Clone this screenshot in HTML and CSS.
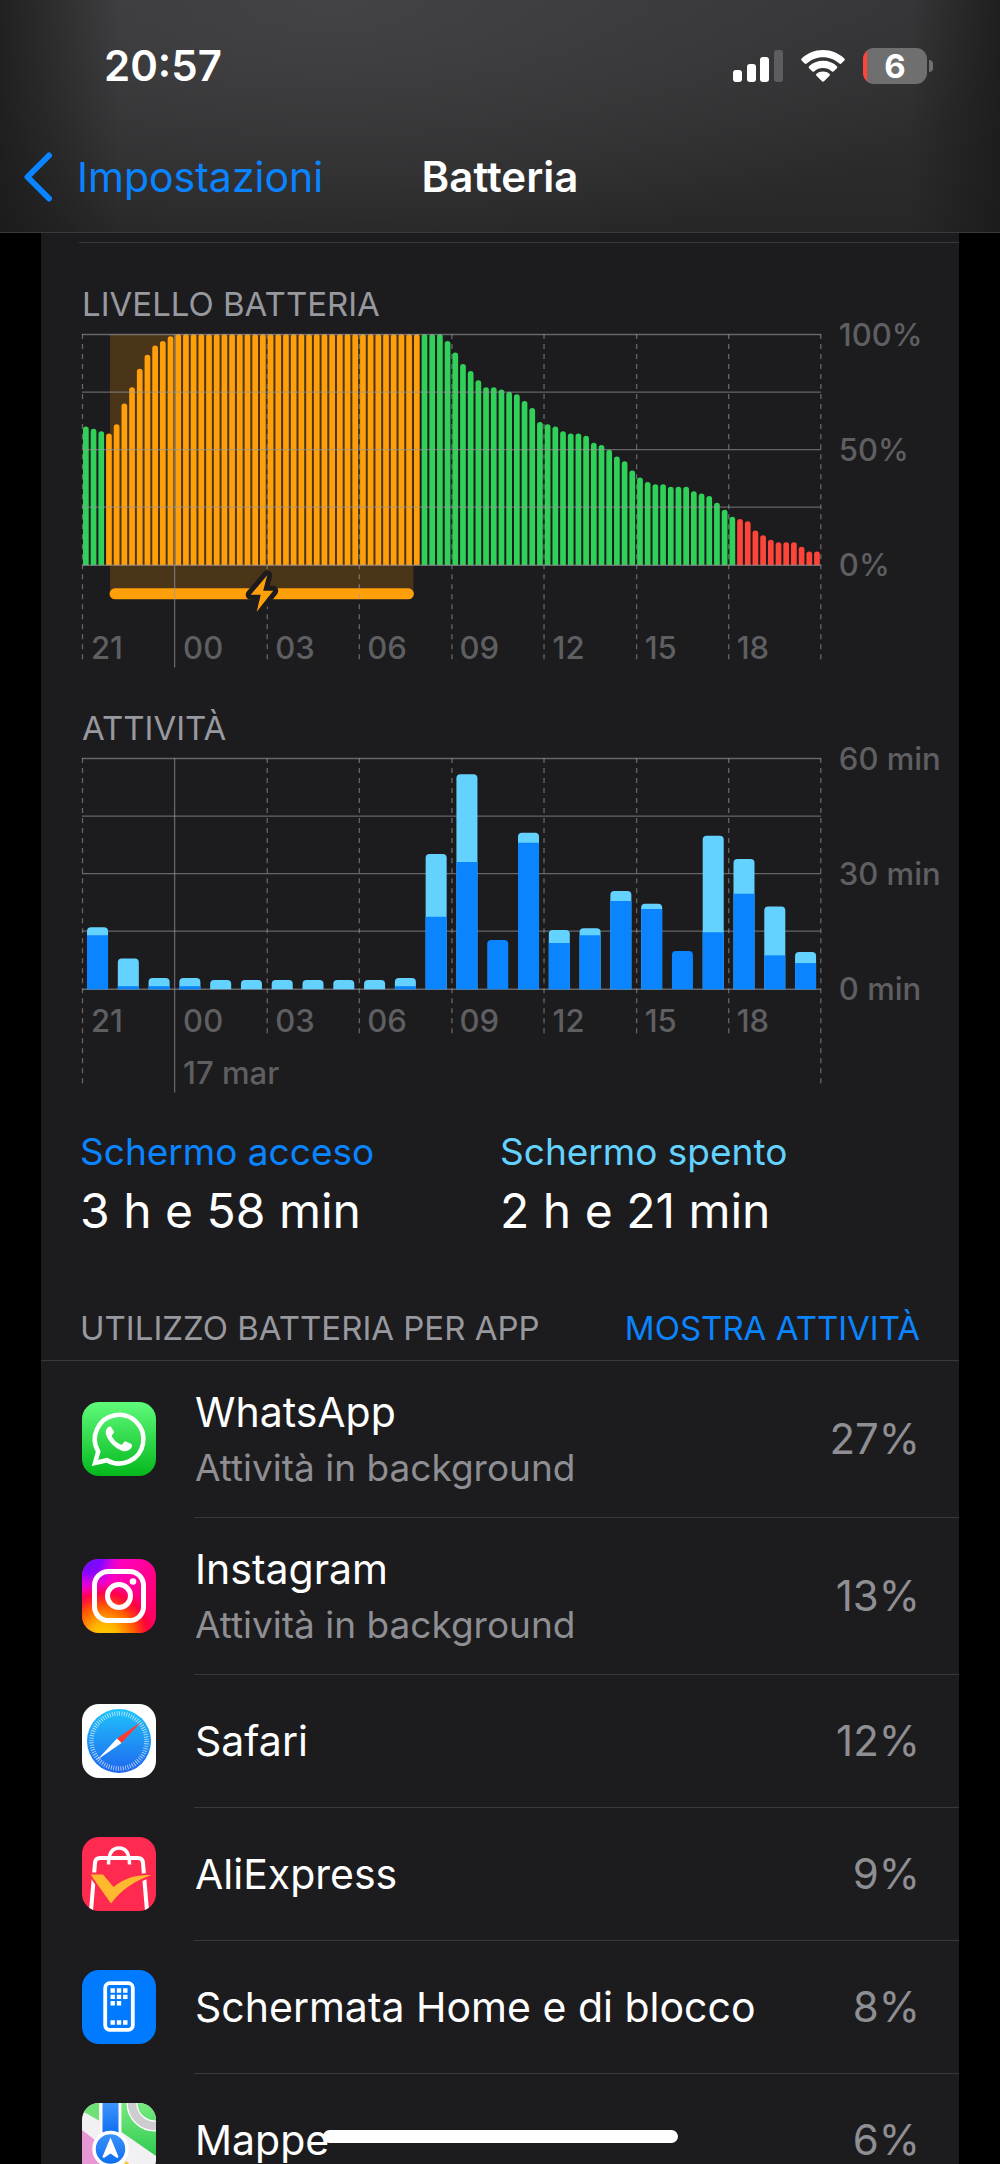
FILE: index.html
```html
<!DOCTYPE html>
<html lang="it">
<head>
<meta charset="utf-8">
<meta name="viewport" content="width=device-width, initial-scale=1">
<title>Batteria</title>
<link rel="stylesheet" href="styles.css">
</head>
<body>
<div class="screen">
  <header class="top">
    <div class="status">
      <span class="clock">20:57</span>
      <div class="status-icons">
        <svg class="signal" viewBox="0 0 50 32" aria-hidden="true">
          <rect x="0" y="20" width="9" height="12" rx="3"/>
          <rect x="14" y="14" width="9" height="18" rx="3"/>
          <rect x="27" y="7" width="9" height="25" rx="3"/>
          <rect class="dim" x="41" y="0" width="9" height="32" rx="3"/>
        </svg>
        <svg class="wifi" viewBox="0 0 44 32" aria-hidden="true">
          <path d="M22 0c8.300 0 15.700 3.200 21.300 8.400.6.600.6 1.400.1 2l-3.100 3.200c-.5.500-1.400.5-2 0C34 9.700 28.300 7.300 22 7.300S10 9.700 5.700 13.600c-.6.500-1.500.5-2 0L.6 10.400c-.5-.6-.5-1.400.1-2C6.300 3.200 13.700 0 22 0z"/>
          <path d="M22 10.800c5.400 0 10.200 2 13.900 5.400.6.500.6 1.400 0 2l-3.100 3.100c-.5.500-1.300.5-1.900.1-2.400-2.100-5.500-3.300-8.900-3.300s-6.500 1.200-8.900 3.300c-.6.400-1.400.4-1.900-.1l-3.100-3.100c-.6-.6-.6-1.500 0-2 3.700-3.400 8.500-5.400 13.900-5.400z"/>
          <path d="M22 21.400c2.500 0 4.700.9 6.400 2.300.7.500.7 1.400.1 2l-5.500 5.600c-.6.600-1.400.6-2 0l-5.500-5.600c-.6-.6-.6-1.500.1-2 1.700-1.400 3.900-2.300 6.400-2.300z"/>
        </svg>
        <div class="battery"><span class="battery-body">6</span><span class="battery-cap"></span></div>
      </div>
    </div>
    <nav class="nav">
      <a class="back" href="#impostazioni">
        <svg class="chevron" viewBox="0 0 28 50" aria-hidden="true"><path d="M25 3.500 3.500 25 25 46.500"/></svg>
        <span>Impostazioni</span>
      </a>
      <h1 class="title">Batteria</h1>
    </nav>
  </header>

  <main class="card">
    <section class="chart-block level-block">
      <h2 class="label">LIVELLO BATTERIA</h2>
      <svg class="chart" viewBox="0 -10 876 350" role="img" aria-label="Livello batteria">
        <path class="charge-zone" d="M28 0H331V259H28z"/>
        <g id="level-bars"></g>
        <path class="charge-bar" d="M33 259.500H326"/>
        <g class="grid">
          <path d="M0 .5H738M0 58H738M0 115.500H738M0 173H738M0 231H738"/>
          <path d="M92.500 0V333"/>
          <path class="dash" d="M.5 0V329M185 0V329M277 0V329M369.500 0V329M461.500 0V329M554 0V329M646 0V329M738 0V329"/>
        </g>
        <path class="bolt" d="M185 241 168.500 260.500h10l-4 17 16.500-21h-10z"/>
        <g class="axis">
          <text x="9" y="325">21</text>
          <text x="101" y="325">00</text>
          <text x="193" y="325">03</text>
          <text x="285" y="325">06</text>
          <text x="377" y="325">09</text>
          <text x="470" y="325">12</text>
          <text x="562" y="325">15</text>
          <text x="654" y="325">18</text>
          <text x="756" y="12">100%</text>
          <text x="756" y="127">50%</text>
          <text x="756" y="242">0%</text>
        </g>
      </svg>
    </section>

    <section class="chart-block">
      <h2 class="label">ATTIVITÀ</h2>
      <svg class="chart" viewBox="0 -10 876 350" role="img" aria-label="Attività">
        <g class="grid">
          <path d="M0 .5H738M0 58H738M0 115.500H738M0 173H738M0 231H738"/>
          <path d="M92.500 0V334"/>
          <path class="dash" d="M.5 0V329M185 0V277M277 0V277M369.500 0V277M461.500 0V277M554 0V277M646 0V277M738 0V329"/>
        </g>
        <g id="activity-bars"></g>
        <g class="axis">
          <text x="9" y="274">21</text>
          <text x="101" y="274">00</text>
          <text x="193" y="274">03</text>
          <text x="285" y="274">06</text>
          <text x="377" y="274">09</text>
          <text x="470" y="274">12</text>
          <text x="562" y="274">15</text>
          <text x="654" y="274">18</text>
          <text x="101" y="326">17 mar</text>
          <text x="756" y="12">60 min</text>
          <text x="756" y="127">30 min</text>
          <text x="756" y="242">0 min</text>
        </g>
      </svg>
    </section>

    <dl class="totals">
      <div class="total">
        <dt class="on">Schermo acceso</dt>
        <dd>3 h e 58 min</dd>
      </div>
      <div class="total">
        <dt class="off">Schermo spento</dt>
        <dd>2 h e 21 min</dd>
      </div>
    </dl>

    <div class="list-head">
      <h2 class="label">UTILIZZO BATTERIA PER APP</h2>
      <button class="toggle" type="button">MOSTRA ATTIVITÀ</button>
    </div>

    <ul class="apps">
      <li class="app tall">
        <svg class="icon" viewBox="0 0 74 74" aria-hidden="true">
          <defs><linearGradient id="wa" x1="0" y1="0" x2="0" y2="1"><stop offset="0" stop-color="#5ffb7b"/><stop offset="1" stop-color="#04b81c"/></linearGradient></defs>
          <rect width="74" height="74" fill="url(#wa)"/>
          <path d="M13 61 16.200 49.500A24.300 24.300 0 1 1 25 58.200z" fill="none" stroke="#fff" stroke-width="4.500"/>
          <path d="M29.500 25.500c-.7-1.400-2.500-1.300-3.500-.3-2.400 2.300-2.900 5.200-1.500 8.600 2.800 6.700 8.500 12.400 15.500 14.900 3.900 1.400 8.200-.1 9.700-3.600.5-1.400.5-2.600-.4-3.100l-5.300-2.600c-.7-.3-1.300-.2-1.700.4l-2 2.500c-.4.500-1 .6-1.600.3-4-1.800-6.900-4.500-8.800-8-.3-.6-.2-1 .2-1.500l1.600-2c.4-.5.4-1 .2-1.600z" fill="#fff"/>
        </svg>
        <div class="app-body"><div class="app-text"><span class="name">WhatsApp</span><span class="note">Attività in background</span></div><span class="share">27%</span></div>
      </li>
      <li class="app tall">
        <svg class="icon" viewBox="0 0 74 74" aria-hidden="true">
          <defs>
            <linearGradient id="ig" x1="0" y1="0" x2="1" y2=".6"><stop offset="0" stop-color="#f0c"/><stop offset=".5" stop-color="#ff00b4"/><stop offset="1" stop-color="#ff0069"/></linearGradient>
            <radialGradient id="ig-warm" cx=".3" cy="1.050" r=".75"><stop offset="0" stop-color="#ffd000"/><stop offset=".25" stop-color="#ffb400"/><stop offset=".55" stop-color="#ff5a00"/><stop offset=".8" stop-color="#ff0030" stop-opacity=".8"/><stop offset="1" stop-color="#ff0060" stop-opacity="0"/></radialGradient>
            <radialGradient id="ig-cool" cx=".08" cy="0" r=".5"><stop offset="0" stop-color="#6a10ff"/><stop offset=".4" stop-color="#8a05ff"/><stop offset="1" stop-color="#f0d" stop-opacity="0"/></radialGradient>
          </defs>
          <rect width="74" height="74" fill="url(#ig)"/>
          <rect width="74" height="74" fill="url(#ig-warm)"/>
          <rect width="74" height="74" fill="url(#ig-cool)"/>
          <g fill="none" stroke="#fff" stroke-width="5"><rect x="12.500" y="12.500" width="49" height="49" rx="14"/><circle cx="37" cy="37" r="11.500"/></g>
          <circle cx="51" cy="22.500" r="3.300" fill="#fff"/>
        </svg>
        <div class="app-body"><div class="app-text"><span class="name">Instagram</span><span class="note">Attività in background</span></div><span class="share">13%</span></div>
      </li>
      <li class="app">
        <svg class="icon" viewBox="0 0 74 74" aria-hidden="true">
          <defs><linearGradient id="sf" x1="0" y1="0" x2="0" y2="1"><stop offset="0" stop-color="#1fc3fb"/><stop offset="1" stop-color="#1f66ee"/></linearGradient></defs>
          <rect width="74" height="74" fill="#fff"/>
          <circle cx="37" cy="37" r="32" fill="url(#sf)"/>
          <circle cx="37" cy="37" r="27.500" fill="none" stroke="#fff" stroke-opacity=".75" stroke-width="4.500" stroke-dasharray=".8 1.600"/>
          <path d="M59 18 35 34.500l4.500 4.500z" fill="#ff3b30"/>
          <path d="M15 56 35 34.500l4.500 4.500z" fill="#fff"/>
        </svg>
        <div class="app-body"><div class="app-text"><span class="name">Safari</span></div><span class="share">12%</span></div>
      </li>
      <li class="app">
        <svg class="icon" viewBox="0 0 74 74" aria-hidden="true">
          <rect width="74" height="74" fill="#ff2a4f"/>
          <g fill="none" stroke="#fff"><path stroke-width="4" d="M9 74 13 26q.4-5 5-5h38q4.600 0 5 5l4 48"/><path stroke-width="3.500" d="M26.500 27.500C26.500 16 30 11 37 11s10.500 5 10.500 16.500"/></g>
          <path d="M8.500 37.500H21l10.500 12.500C43 41 54 37.500 69.500 38 53 44 41 51 29 66.500z" fill="#ffb92e" stroke="#ff2a4f" stroke-width="4" paint-order="stroke"/>
        </svg>
        <div class="app-body"><div class="app-text"><span class="name">AliExpress</span></div><span class="share">9%</span></div>
      </li>
      <li class="app">
        <svg class="icon" viewBox="0 0 74 74" aria-hidden="true">
          <rect width="74" height="74" fill="#007aff"/>
          <rect x="23.200" y="13.200" width="27.600" height="46.600" rx="4.500" fill="none" stroke="#fff" stroke-width="3.800"/>
          <path fill="#fff" d="M28.500 18.300h4.400v4.400h-4.400zM34.800 18.300h4.400v4.400h-4.400zM41.100 18.300h4.400v4.400h-4.400zM28.500 24.700h4.400v4.400h-4.400zM34.800 24.700h4.400v4.400h-4.400zM41.100 24.700h4.400v4.400h-4.400zM28.500 31.100h4.400v4.400h-4.400zM34.800 31.100h4.400v4.400h-4.400zM28.500 50.300h4.400v4.400h-4.400zM34.800 50.300h4.400v4.400h-4.400zM41.100 50.300h4.400v4.400h-4.400z"/>
        </svg>
        <div class="app-body"><div class="app-text"><span class="name">Schermata Home e di blocco</span></div><span class="share">8%</span></div>
      </li>
      <li class="app">
        <svg class="icon" viewBox="0 0 74 74" aria-hidden="true">
          <defs>
            <linearGradient id="mp-green" x1="0" y1="0" x2="0" y2="1"><stop offset="0" stop-color="#79ea80"/><stop offset="1" stop-color="#2fca50"/></linearGradient>
            <linearGradient id="mp-blue" x1="0" y1="0" x2="0" y2="1"><stop offset="0" stop-color="#3d94fb"/><stop offset="1" stop-color="#0b6cf0"/></linearGradient>
          </defs>
          <rect width="74" height="74" fill="#f1f1f3"/>
          <path d="M0 0h17v17.500L0 8z" fill="#6fe076"/>
          <path d="M39.500 0H74v53L39.500 29z" fill="url(#mp-green)"/>
          <path d="M0 27 30 50v24H0z" fill="#e797d4"/>
          <path d="M44 58 60 74H36z" fill="#fbc00f"/>
          <circle cx="73" cy="0" r="23" fill="none" stroke="#fff" stroke-width="11"/>
          <circle cx="73" cy="0" r="23" fill="none" stroke="#cdcdd1" stroke-width="8.500"/>
          <path d="M18.500 0h20v40h-20z" fill="#fff"/>
          <path d="M20.500 0h16v32h-16z" fill="url(#mp-blue)"/>
          <circle cx="28.500" cy="46" r="16.500" fill="url(#mp-blue)" stroke="#fff" stroke-width="3.500"/>
          <path d="m28.500 34.500 7.800 18.700c.4 1.100-.6 2-1.600 1.500l-6.200-4.200-6.200 4.200c-1 .5-2-.4-1.600-1.500z" fill="#fff"/>
        </svg>
        <div class="app-body"><div class="app-text"><span class="name">Mappe</span></div><span class="share">6%</span></div>
      </li>
    </ul>
  </main>
  <div class="home-indicator"></div>
</div>
<script src="charts.js"></script>
</body>
</html>
```
FILE: styles.css
```css
* { box-sizing: border-box; }

html, body { height: 100%; margin: 0; background: #000; }

body {
  color: #fff;
  font-family: Inter, "Liberation Sans", sans-serif;
  overflow: hidden;
}

h1, h2, dl, dd, ul { margin: 0; padding: 0; font-weight: 400; }

.screen {
  position: relative;
  display: flex;
  flex-direction: column;
  height: 100%;
  overflow: hidden;
}

/* Status bar and navigation */
.top {
  flex: none;
  padding: 36px 0 9px;
  border-bottom: 1px solid #3a3a3c;
  background:
    linear-gradient(90deg, rgba(24, 24, 24, .75) 0, transparent 12%, transparent 91%, rgba(24, 24, 24, .75) 100%),
    radial-gradient(ellipse 70% 110% at 33% 0, #434345 0, rgba(67, 67, 69, 0) 100%),
    linear-gradient(#343436, #272728);
}

.status {
  display: flex;
  align-items: center;
  justify-content: space-between;
  height: 60px;
  padding: 0 67px 0 104px;
}

.clock { font-size: 42px; font-weight: 600; line-height: 60px; }

.status-icons { display: flex; align-items: center; gap: 18px; fill: #fff; }
.signal { width: 50px; height: 32px; }
.signal .dim { fill: #5d5d5f; }
.wifi { width: 44px; height: 32px; }

.battery { display: flex; align-items: center; gap: 2px; }
.battery-body {
  width: 64px;
  height: 36px;
  border-radius: 11px;
  background: linear-gradient(90deg, #ff453a 4px, #6f6f70 4px);
  font-size: 33px;
  font-weight: 700;
  line-height: 36px;
  text-align: center;
}
.battery-cap { width: 4px; height: 12px; border-radius: 0 4px 4px 0; background: #6f6f70; }

.nav {
  display: grid;
  grid-template-columns: 1fr auto 1fr;
  align-items: center;
  height: 127px;
  padding: 34px 24px 0;
  line-height: 54px;
}

.back {
  display: flex;
  align-items: center;
  gap: 25px;
  color: #0a84ff;
  font-size: 41px;
  text-decoration: none;
}
.chevron { width: 28px; height: 50px; fill: none; stroke: currentColor; stroke-width: 6; stroke-linecap: round; stroke-linejoin: round; }
.title { font-size: 42px; font-weight: 600; }

/* Card */
.card {
  flex: 1;
  min-height: 0;
  margin: 0 41px;
  padding-top: 9px;
  background: #1c1c1e;
  overflow: hidden;
}

.label { color: #98989f; font-size: 33px; line-height: 40px; }

.chart-block { padding: 34px 0 0 41px; }
.level-block { position: relative; padding-top: 42px; }
.level-block::before {
  content: "";
  position: absolute;
  inset: 0 0 auto 38px;
  height: 1px;
  background: #38383a;
}

.chart { display: block; width: 100%; height: auto; overflow: visible; }
.grid { fill: none; stroke: #98989d; stroke-opacity: .6; stroke-width: 1.3; }
.dash { stroke-dasharray: 5 5; }
.axis { fill: #5f5f62; font-size: 31px; font-weight: 500; }
.charge-zone { fill: #4a3519; }
.charge-bar { stroke: #ff9f0a; stroke-width: 11; stroke-linecap: round; }
.bolt { fill: #ff9f0a; stroke: #1c1c1e; stroke-width: 10; stroke-linejoin: round; paint-order: stroke; }
.charging { fill: #ff9f0a; }
.normal { fill: #30d158; }
.low { fill: #ff453a; }
.awake { fill: #0a84ff; }
.asleep { fill: #64d2ff; }

/* Totals */
.totals { display: grid; grid-template-columns: 420px 1fr; padding: 28px 39px 0; }
.totals dt { font-size: 37px; line-height: 50px; }
.totals dd { font-size: 48px; line-height: 68px; }
.on { color: #0a84ff; }
.off { color: #64d2ff; }

/* App list */
.list-head {
  display: flex;
  align-items: center;
  justify-content: space-between;
  padding: 63px 39px 12px;
  border-bottom: 1px solid #38383a;
}
.toggle {
  padding: 0;
  border: 0;
  background: none;
  color: #0a84ff;
  font: inherit;
  font-size: 33px;
  line-height: 40px;
}

.apps { list-style: none; }
.app { display: flex; align-items: center; gap: 38px; padding-left: 41px; }
.icon { flex: none; width: 74px; height: 74px; border-radius: 17px; }
.app-body {
  display: flex;
  flex: 1;
  align-items: center;
  justify-content: space-between;
  min-height: 133px;
  padding: 0 39px 0 1px;
  border-bottom: 1px solid #38383a;
}
.tall .app-body { min-height: 157px; }
.app-text { display: flex; flex-direction: column; }
.name { font-size: 41px; line-height: 58px; }
.note { color: #8e8e93; font-size: 37px; line-height: 54px; }
.share { color: #8e8e93; font-size: 42px; line-height: 58px; }

.home-indicator {
  position: absolute;
  left: 50%;
  bottom: 21px;
  width: 355px;
  height: 13px;
  margin-left: -177px;
  border-radius: 7px;
  background: #fff;
}
```
FILE: charts.js
```js
const NS = 'http://www.w3.org/2000/svg';
const WIDTH = 738;
const HEIGHT = 231;

// One reading per slot, in percent.
const levels = [
  60, 59, 58, 57, 61, 70, 77, 85, 91, 95, 97, 99,
  ...Array(35).fill(100),
  97, 92, 87, 84, 80, 77, 77, 76, 75, 74, 71, 68, 62,
  61, 60, 58, 57, 57, 56, 53, 52, 50, 47, 45, 41,
  38, 36, 35, 35, 34, 34, 34, 32, 31, 30, 27, 24,
  21, 20, 19, 15, 13, 11, 10, 10, 10, 8, 6, 6
];

// Hourly minutes: [screen on, total].
const activity = [
  [14, 16.1], [0.8, 8], [0.8, 2.9], [0.8, 2.9], [0, 2.4], [0, 2.4],
  [0, 2.4], [0, 2.4], [0, 2.4], [0, 2.4], [0.8, 2.9], [18.8, 35.1],
  [33, 55.8], [12.8, 12.8], [38, 40.6], [12, 15.4], [14, 15.8], [22.9, 25.5],
  [20.8, 22.2], [9.9, 9.9], [14.8, 39.8], [24.8, 33.8], [8.8, 21.5], [6.8, 9.7]
];

// A bar that stands on the baseline, with its two top corners rounded.
function bar(parent, x, width, height, radius, className) {
  const top = HEIGHT - height;
  const r = Math.min(radius, height);
  const path = document.createElementNS(NS, 'path');
  path.setAttribute('class', className);
  path.setAttribute('d',
    `M${x} ${HEIGHT}V${top + r}a${r} ${r} 0 0 1 ${r} ${-r}h${width - 2 * r}a${r} ${r} 0 0 1 ${r} ${r}V${HEIGHT}z`);
  parent.append(path);
}

const levelBars = document.getElementById('level-bars');
const slot = WIDTH / levels.length;
levels.forEach((value, i) => {
  const kind = i >= 3 && i < 44 ? 'charging' : value > 20 ? 'normal' : 'low';
  bar(levelBars, i * slot + 1, slot - 2, value / 100 * HEIGHT, 2.8, kind);
});

const activityBars = document.getElementById('activity-bars');
const hour = WIDTH / activity.length;
activity.forEach(([on, total], i) => {
  const x = i * hour + 5;
  if (total > on) bar(activityBars, x, 21, total / 60 * HEIGHT, 4, 'asleep');
  if (on) bar(activityBars, x, 21, on / 60 * HEIGHT, total > on ? 0 : 4, 'awake');
});
```
